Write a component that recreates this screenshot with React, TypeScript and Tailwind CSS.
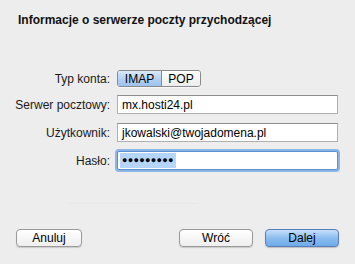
import React from "react";

const labelCls = "w-[110px] text-right text-[12px] leading-[14px] text-[#1a1a1a] pr-0";
const inputCls =
  "h-[19px] w-[221px] bg-white border border-[#b0b0b0] border-t-[#8e8e8e] flex items-center pl-[4px] text-[12px] text-black";

export default function App() {
  return (
    <div
      className="w-[355px] h-[264px] bg-[#ededed] flex flex-col overflow-hidden"
      style={{ fontFamily: '"Liberation Sans", Arial, sans-serif' }}
    >
      <div className="pt-[12px] pl-[18px] text-[12px] leading-[16px] font-bold text-[#111]">
        Informacje o serwerze poczty przychodzącej
      </div>

      <div className="mt-[42px] flex flex-col">
        <div className="flex items-center gap-[7px] h-[17px]">
          <div className={labelCls}>Typ konta:</div>
          <div className="flex h-[17px] rounded-[3px] border border-[#8a8a8a] overflow-hidden shadow-[0_1px_0_rgba(255,255,255,0.6)]">
            <div className="w-[44px] flex items-center justify-center text-[12px] text-black bg-gradient-to-b from-[#dbe9f9] via-[#b6d2f2] to-[#9cc2ee] border-r border-[#8a8a8a]">
              IMAP
            </div>
            <div className="w-[38px] flex items-center justify-center text-[12px] text-black bg-gradient-to-b from-white to-[#ededed]">
              POP
            </div>
          </div>
        </div>

        <div className="flex items-center gap-[7px] mt-[8px]">
          <div className={labelCls}>Serwer pocztowy:</div>
          <div className={inputCls}>mx.hosti24.pl</div>
        </div>

        <div className="flex items-center gap-[7px] mt-[9px]">
          <div className={labelCls}>Użytkownik:</div>
          <div className={inputCls}>jkowalski@twojadomena.pl</div>
        </div>

        <div className="flex items-center gap-[7px] mt-[9px]">
          <div className={labelCls}>Hasło:</div>
          <div className="h-[19px] w-[221px] bg-white border border-[#5b8fd3] rounded-[2px] shadow-[0_0_0_2px_#8cb6e8] flex items-center pl-[2px]">
            <span className="bg-[#b5d5fb] h-[15px] flex items-center px-[2px] text-[9px] tracking-[0.3px] text-black">
              ●●●●●●●●●
            </span>
          </div>
        </div>
      </div>

      <div className="mt-[33px] ml-[68px] w-[130px] h-px bg-[#e8e8e8]" />

      <div className="mt-[25px] flex items-center px-[16px]">
        <button className="w-[66px] h-[18px] rounded-[4px] border border-[#9a9a9a] bg-gradient-to-b from-white to-[#eeeeee] text-[12px] leading-[16px] text-black shadow-[0_1px_1px_rgba(0,0,0,0.15)]">
          Anuluj
        </button>
        <div className="flex-1" />
        <button className="w-[74px] h-[18px] rounded-[4px] border border-[#9a9a9a] bg-gradient-to-b from-white to-[#eeeeee] text-[12px] leading-[16px] text-black shadow-[0_1px_1px_rgba(0,0,0,0.15)]">
          Wróć
        </button>
        <button className="ml-[12px] w-[74px] h-[18px] rounded-[4px] border border-[#5a7fb8] bg-gradient-to-b from-[#c7e0fa] via-[#8cbdf0] to-[#6eaaea] text-[12px] leading-[16px] text-black shadow-[0_1px_1px_rgba(0,0,0,0.2)]">
          Dalej
        </button>
      </div>
    </div>
  );
}
